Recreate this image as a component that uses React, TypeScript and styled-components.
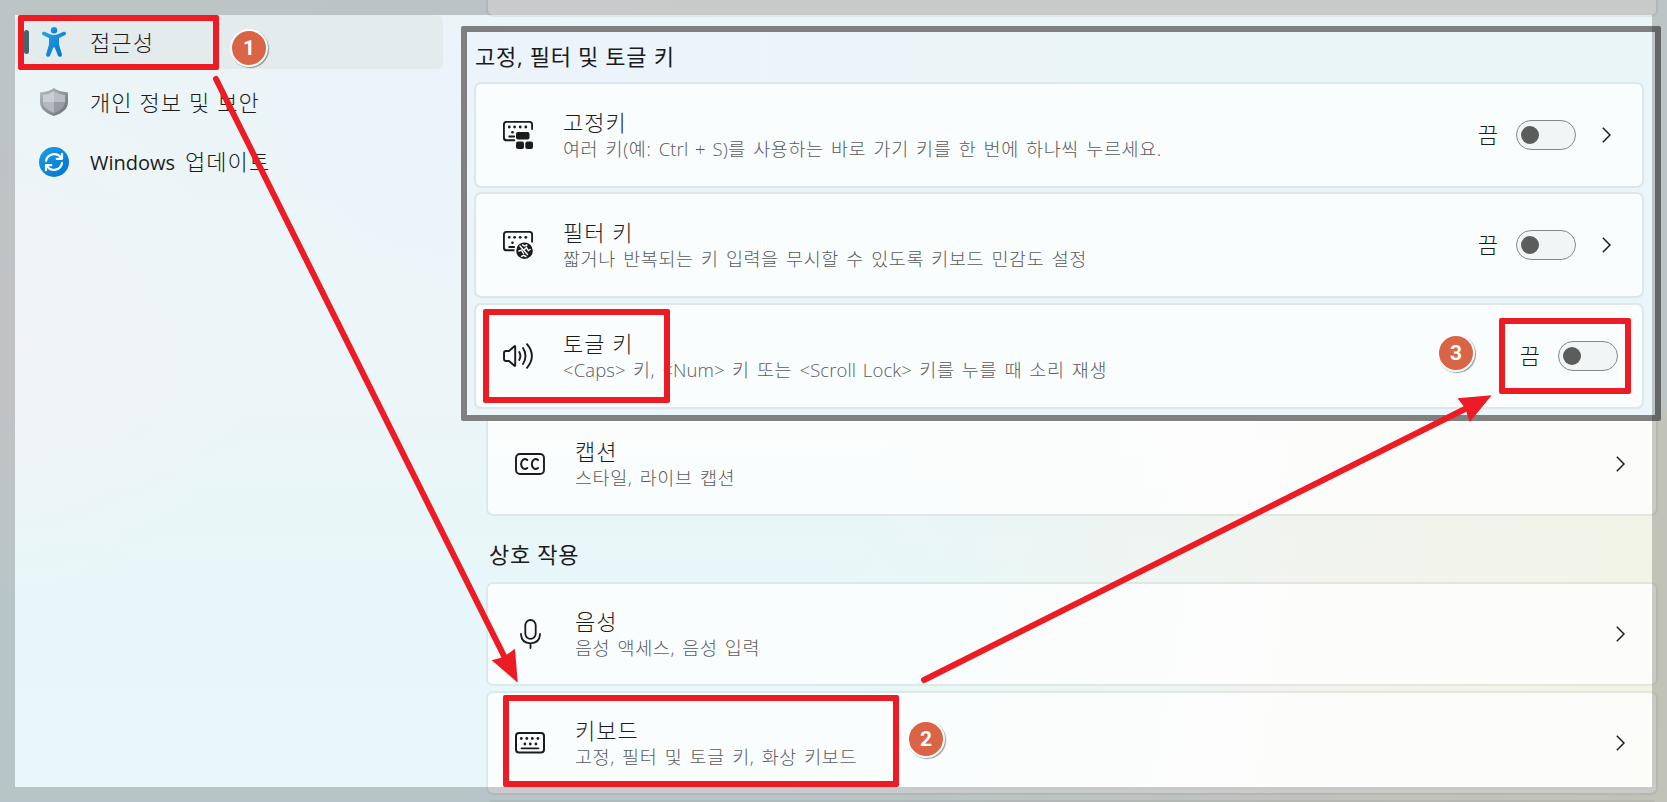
import type { FC, ReactNode } from 'react'
import React from 'react'
import styled, { createGlobalStyle } from 'styled-components'

const GlobalStyle = createGlobalStyle`
  * {
    box-sizing: border-box;
  }

  body {
    margin: 0;
    overflow: hidden;
    color: #1b1b1b;
    font-family: 'Open Sans', 'Noto Sans CJK KR', sans-serif;
  }
`

const Page = styled.div`
  position: relative;
  display: flex;
  width: 1667px;
  height: 802px;
  overflow: hidden;
  background:
    radial-gradient(ellipse 260px 230px at 470px 100px, rgba(235, 243, 252, 0.8), transparent),
    radial-gradient(ellipse 260px 260px at 0 340px, rgba(242, 243, 246, 0.9), transparent),
    linear-gradient(100deg, transparent 48%, rgba(242, 243, 237, 0.95) 75%, #f3f4e6 96%) 0 410px
      no-repeat,
    linear-gradient(180deg, #ebf5f7 0%, #ecf5f7 50%, #e7f7f9 72%, #e7f7fa 100%);
`

/* Navigation */

const Sidebar = styled.nav`
  display: flex;
  flex: none;
  flex-direction: column;
  gap: 6px;
  width: 461px;
  padding: 15px 18px 0 15px;
`

const NavItem = styled.div<{ $active?: boolean }>`
  display: flex;
  align-items: center;
  height: 54px;
  padding-left: 9px;
  border-radius: 6px;
  background: ${({ $active }) => ($active ? '#e4ebed' : 'transparent')};
`

const Indicator = styled.span<{ $active?: boolean }>`
  width: 5px;
  height: 24px;
  border-radius: 3px;
  background: ${({ $active }) => ($active ? '#43666c' : 'transparent')};
`

const NavIcon = styled.span`
  display: flex;
  justify-content: center;
  width: 30px;
  margin: 0 21px 0 10px;
`

const NavLabel = styled.span`
  padding-bottom: 1px;
  font-size: 22px;
  line-height: 30px;
  letter-spacing: 1.1px;
  white-space: nowrap;
  font-weight: 300;
`

const NavLatin = styled.span`
  margin-right: 3px;
  font-size: 20px;
  font-weight: 400;
  letter-spacing: 0;
`

const Latin = styled.span`
  font-size: 18.5px;
  letter-spacing: 0.1px;
`

/* Content */

const Main = styled.main`
  display: flex;
  flex: none;
  flex-direction: column;
  width: 1206px;
`

const Card = styled.section`
  display: flex;
  flex: none;
  align-items: center;
  height: 106px;
  padding: 0 31px 0 27px;
  border: 2px solid #dde7ea;
  border-radius: 7px;
  background: #f9fdfe;
  background-clip: padding-box;
`

const PageCard = styled(Card)`
  height: 104px;
  margin: 0 9px 5px 25px;
  border-color: rgba(0, 0, 0, 0.055);
  background: rgba(255, 255, 255, 0.77);
  background-clip: padding-box;
`

const CutCard = styled(PageCard)`
  height: 17px;
  margin-bottom: 9px;
  border-top: 0;
  border-radius: 0 0 7px 7px;
`

const CaptionCard = styled(PageCard)`
  margin-top: -9px;
  margin-bottom: 0;
`

const ToggleCard = styled(Card)`
  margin-top: 1px;
  padding-right: 24px;
`

const Panel = styled.div`
  z-index: 1;
  display: flex;
  flex: none;
  flex-direction: column;
  gap: 4px;
  width: 1200px;
  height: 395px;
  padding: 0 11px 0 7px;
  border: 6px solid #808080;
  border-radius: 2px;
  background:
    linear-gradient(180deg, transparent 20%, #e9f5f8 60%),
    linear-gradient(90deg, #ecf4fb 0%, #ebf5f7 50%, #e9f5f8 100%);
`

const Heading = styled.h2<{ $inPanel?: boolean }>`
  flex: none;
  height: ${({ $inPanel }) => ($inPanel ? 46 : 66)}px;
  margin: 0;
  padding: ${({ $inPanel }) => ($inPanel ? '8px 0 0 1px' : '22px 0 0 28px')};
  font-size: 22px;
  line-height: 32px;
  font-weight: 400;
  letter-spacing: 0.7px;
`

const CardIcon = styled.span`
  display: flex;
  justify-content: center;
  flex: none;
  width: 30px;
  margin-right: 30px;
`

const CardText = styled.div`
  flex: 1;
  padding-top: 1px;
  white-space: nowrap;
`

const CardTitle = styled.div`
  font-size: 22px;
  line-height: 26px;
  font-weight: 300;
  letter-spacing: 1px;
`

const CardDescription = styled.div`
  padding-top: 1px;
  color: #5a5b5b;
  font-size: 18.5px;
  line-height: 26px;
  font-weight: 300;
  letter-spacing: 0.6px;
  word-spacing: 1.9px;
`

const SwitchLabel = styled.span`
  margin-right: 18px;
  padding-bottom: 2px;
  font-size: 22px;
  line-height: 30px;
  font-weight: 300;
`

const Switch = styled.span`
  display: flex;
  align-items: center;
  width: 60px;
  height: 30px;
  padding-left: 4px;
  border: 1px solid #868788;
  border-radius: 15px;
  background: #f2f5f6;

  &::before {
    width: 18px;
    height: 18px;
    border-radius: 50%;
    background: #5b5d5d;
    content: '';
  }
`

const ChevronSvg = styled.svg<{ $spaced?: boolean }>`
  margin-left: ${({ $spaced }) => ($spaced ? 26 : 0)}px;
`

/* Annotations drawn over the page */

const Shade = styled.div`
  position: absolute;
  inset: 0;
  z-index: 2;
  border: 15px solid rgba(0, 0, 0, 0.2);
`

const Marker = styled.div<{ $x: number; $y: number; $w: number; $h: number }>`
  position: absolute;
  top: ${({ $y }) => $y}px;
  left: ${({ $x }) => $x}px;
  z-index: 3;
  width: ${({ $w }) => $w}px;
  height: ${({ $h }) => $h}px;
  border: 6px solid #ed1c24;
  border-radius: 2px;
`

const Arrows = styled.svg`
  position: absolute;
  inset: 0;
  z-index: 3;
`

const Step = styled.div<{ $x: number; $y: number }>`
  position: absolute;
  top: ${({ $y }) => $y - 19}px;
  left: ${({ $x }) => $x - 19}px;
  z-index: 4;
  display: flex;
  align-items: center;
  justify-content: center;
  width: 38px;
  height: 38px;
  border: 2px solid #fff;
  border-radius: 50%;
  background: #d96446;
  box-shadow: 1px 1px 1px rgba(0, 0, 0, 0.4);
  color: #fff;
  font: bold 21px/34px Roboto, sans-serif;
`

/* Icons */

const PersonIcon = () => (
  <svg width="24" height="30" viewBox="0 0 24 30">
    <defs>
      <linearGradient id="person" x1="0" y1="0" x2="1" y2="1">
        <stop offset="0" stopColor="#22a5e8" />
        <stop offset="1" stopColor="#0670c9" />
      </linearGradient>
    </defs>
    <g fill="url(#person)">
      <circle cx="12" cy="3.2" r="3.2" />
      <path d="M2.600 4.800 8 7.200q4 1.500 8 0l5.400-2.400q1.800-.6 2.500.9.5 1.600-1.100 2.500L17 10.900v6.600l2.900 9.700q.3 1.900-1.300 2.500-1.900.5-2.700-1.200L12.900 21q-.9-1.500-1.800 0l-3 7.500q-.8 1.700-2.700 1.200-1.600-.6-1.300-2.500L7 17.500v-6.600L1.200 8.200Q-.4 7.300.1 5.700q.7-1.500 2.500-.9Z" />
    </g>
  </svg>
)

const ShieldIcon = () => (
  <svg width="28" height="28" viewBox="0 0 28 28">
    <defs>
      <linearGradient id="shield" x1="0" y1="0" x2="1" y2="1">
        <stop offset="0" stopColor="#b9bec4" />
        <stop offset="1" stopColor="#666d75" />
      </linearGradient>
    </defs>
    <path
      d="M14 0q5.500 3.700 13 4.200 1 .1 1 1v9q0 9-14 13.800Q0 23.200 0 14.200v-9q0-.9 1-1Q8.500 3.700 14 0Z"
      fill="url(#shield)"
    />
    <path d="M14 3.200Q9 6.300 3 6.900v7.200h11Z" fill="#c9ced4" />
    <path d="M14 3.200q5 3.100 11 3.700v7.200H14Z" fill="#b9bec5" />
    <path d="M3 14.100h11v10.800Q3 20.800 3 14.100Z" fill="#b4b9c0" />
    <path d="M25 14.100H14v10.800q11-4.100 11-10.800Z" fill="#979da5" />
  </svg>
)

const UpdateIcon = () => (
  <svg width="30" height="30" viewBox="0 0 30 30" fill="none">
    <defs>
      <linearGradient id="update" x1="0" y1="0" x2="1" y2="1">
        <stop offset="0" stopColor="#1b9de5" />
        <stop offset="1" stopColor="#0073d1" />
      </linearGradient>
    </defs>
    <circle cx="15" cy="15" r="15" fill="url(#update)" />
    <g stroke="#fff" strokeWidth="2.200" strokeLinecap="round" strokeLinejoin="round">
      <path d="M7 13.800A8.300 8.300 0 0 1 22 10.800" />
      <path d="M23 6.800v5h-5.300" />
      <path d="M23 16.200A8.300 8.300 0 0 1 8 19.200" />
      <path d="M7 23.200v-5h5.300" />
    </g>
  </svg>
)

const StickyKeysIcon = () => (
  <svg width="30" height="28" viewBox="0 0 30 28" fill="none">
    <path
      d="M12 19.300H3.600A2.700 2.700 0 0 1 .9 16.600V3.600A2.700 2.700 0 0 1 3.600.9h22.800a2.700 2.700 0 0 1 2.700 2.700v5.200"
      stroke="#1b1b1b"
      strokeWidth="1.900"
    />
    <path d="M6.200 15.500h5" stroke="#1b1b1b" strokeWidth="1.800" strokeLinecap="round" />
    <g fill="#1b1b1b">
      <circle cx="6.300" cy="6" r="1.400" />
      <circle cx="11.600" cy="6" r="1.400" />
      <circle cx="17.200" cy="6" r="1.400" />
      <circle cx="22.800" cy="6" r="1.400" />
      <circle cx="9.500" cy="11.300" r="1.300" />
      <rect x="13" y="11" width="13.500" height="7.500" rx="2" />
      <rect x="13" y="20.600" width="8" height="7.300" rx="2" />
      <rect x="22.300" y="20.600" width="7.700" height="7.300" rx="2" />
    </g>
  </svg>
)

const FilterKeysIcon = () => (
  <svg width="30" height="28" viewBox="0 0 30 28" fill="none">
    <path
      d="M11.500 19.300H3.600A2.700 2.700 0 0 1 .9 16.600V3.600A2.700 2.700 0 0 1 3.600.9h22.800a2.700 2.700 0 0 1 2.700 2.700v7.800"
      stroke="#1b1b1b"
      strokeWidth="1.900"
    />
    <path d="M6.200 16h5" stroke="#1b1b1b" strokeWidth="1.800" strokeLinecap="round" />
    <g fill="#1b1b1b">
      <circle cx="6.300" cy="6.300" r="1.400" />
      <circle cx="11.600" cy="6.300" r="1.400" />
      <circle cx="17.200" cy="6.300" r="1.400" />
      <circle cx="22.800" cy="6.300" r="1.400" />
      <circle cx="9.500" cy="11.800" r="1.300" />
      <circle cx="21.500" cy="19.700" r="8.300" />
    </g>
    <path
      d="m17 15 7.500 8.500M16 20l2.500-.8 2 3.300M21 19l2.500-2.500 1.800 3.300 1.800-1.300M19.500 13.800l2 1.200 2.500-1M18.500 25.300l2-1 2.500 1.200"
      stroke="#f9fdfe"
      strokeWidth="1.400"
      strokeLinecap="round"
    />
  </svg>
)

const SpeakerIcon = () => (
  <svg
    width="30"
    height="26"
    viewBox="0 0 30 26"
    fill="none"
    stroke="#1b1b1b"
    strokeWidth="1.900"
    strokeLinecap="round"
    strokeLinejoin="round"
  >
    <path d="M12.200 3.500v19q0 .8-.8.3L6 18H3q-2 0-2-2v-6q0-2 2-2h3l5.400-4.800q.8-.5.8.3Z" />
    <path d="M16.200 9q2.400 4 0 8" />
    <path d="M20 5q5 8 0 16" />
    <path d="M24 1.200q9.800 11.800 0 23.600" />
  </svg>
)

const CaptionIcon = () => (
  <svg width="30" height="22" viewBox="0 0 30 22" fill="none" stroke="#1b1b1b">
    <rect x="1" y="1" width="28" height="20" rx="4" strokeWidth="1.900" />
    <g strokeWidth="2" strokeLinecap="round">
      <path d="M12.300 7q-2.200-1.900-4.300-.3-1.900 1.600-1.900 4.300t1.900 4.300q2.100 1.600 4.300-.3" />
      <path d="M23 7q-2.200-1.900-4.300-.3-1.900 1.600-1.900 4.300t1.900 4.300q2.100 1.600 4.300-.3" />
    </g>
  </svg>
)

const MicIcon = () => (
  <svg
    width="21"
    height="30"
    viewBox="0 0 21 30"
    fill="none"
    stroke="#1b1b1b"
    strokeWidth="1.800"
    strokeLinecap="round"
  >
    <rect x="5.300" y="1" width="10.400" height="18.800" rx="5.200" />
    <path d="M1 14.800v.8Q1.600 24 10.500 24.300 19.400 24 20 15.600v-.8M10.500 24.300v4.800" />
  </svg>
)

const KeyboardIcon = () => (
  <svg width="30" height="22" viewBox="0 0 30 22" fill="none">
    <rect x="1" y="1" width="28" height="19.600" rx="3" stroke="#1b1b1b" strokeWidth="2" />
    <path d="M6.500 16.300h17" stroke="#1b1b1b" strokeWidth="1.800" strokeLinecap="round" />
    <g fill="#1b1b1b">
      <circle cx="6.300" cy="6.500" r="1.400" />
      <circle cx="11.800" cy="6.500" r="1.400" />
      <circle cx="17.300" cy="6.500" r="1.400" />
      <circle cx="22.900" cy="6.500" r="1.400" />
      <circle cx="9.900" cy="12" r="1.400" />
      <circle cx="15.300" cy="12" r="1.400" />
      <circle cx="20.900" cy="12" r="1.400" />
    </g>
  </svg>
)

const Chevron: FC<{ spaced?: boolean }> = ({ spaced }) => (
  <ChevronSvg $spaced={spaced} width="9" height="16" viewBox="0 0 9 16" fill="none">
    <path d="m.8.800 7.200 7.200-7.200 7.200" stroke="#1b1b1b" strokeWidth="1.500" />
  </ChevronSvg>
)

interface CardBodyProps {
  icon: ReactNode
  title: string
  children: ReactNode
}

const CardBody: FC<CardBodyProps> = ({ icon, title, children }) => (
  <>
    <CardIcon>{icon}</CardIcon>
    <CardText>
      <CardTitle>{title}</CardTitle>
      <CardDescription>{children}</CardDescription>
    </CardText>
  </>
)

const OffSwitch = () => (
  <>
    <SwitchLabel>끔</SwitchLabel>
    <Switch role="switch" aria-checked="false" />
  </>
)

const App: FC = () => (
  <>
    <GlobalStyle />
    <Page>
      <Sidebar>
        <NavItem $active>
          <Indicator $active />
          <NavIcon>
            <PersonIcon />
          </NavIcon>
          <NavLabel>접근성</NavLabel>
        </NavItem>
        <NavItem>
          <Indicator />
          <NavIcon>
            <ShieldIcon />
          </NavIcon>
          <NavLabel>개인 정보 및 보안</NavLabel>
        </NavItem>
        <NavItem>
          <Indicator />
          <NavIcon>
            <UpdateIcon />
          </NavIcon>
          <NavLabel>
            <NavLatin>Windows</NavLatin> 업데이트
          </NavLabel>
        </NavItem>
      </Sidebar>

      <Main>
        <CutCard />
        <Panel>
          <Heading $inPanel>고정, 필터 및 토글 키</Heading>
          <Card>
            <CardBody icon={<StickyKeysIcon />} title="고정키">
              여러 키(예: <Latin>Ctrl + S</Latin>)를 사용하는 바로 가기 키를 한 번에
              하나씩 누르세요.
            </CardBody>
            <OffSwitch />
            <Chevron spaced />
          </Card>
          <Card>
            <CardBody icon={<FilterKeysIcon />} title="필터 키">
              짧거나 반복되는 키 입력을 무시할 수 있도록 키보드 민감도 설정
            </CardBody>
            <OffSwitch />
            <Chevron spaced />
          </Card>
          <ToggleCard>
            <CardBody icon={<SpeakerIcon />} title="토글 키">
              <Latin>&lt;Caps&gt;</Latin> 키, <Latin>&lt;Num&gt;</Latin> 키 또는{' '}
              <Latin>&lt;Scroll Lock&gt;</Latin> 키를 누를 때 소리 재생
            </CardBody>
            <OffSwitch />
          </ToggleCard>
        </Panel>

        <CaptionCard>
          <CardBody icon={<CaptionIcon />} title="캡션">
            스타일, 라이브 캡션
          </CardBody>
          <Chevron />
        </CaptionCard>
        <Heading>상호 작용</Heading>
        <PageCard>
          <CardBody icon={<MicIcon />} title="음성">
            음성 액세스, 음성 입력
          </CardBody>
          <Chevron />
        </PageCard>
        <PageCard>
          <CardBody icon={<KeyboardIcon />} title="키보드">
            고정, 필터 및 토글 키, 화상 키보드
          </CardBody>
          <Chevron />
        </PageCard>
        <PageCard />
      </Main>

      <Shade />
      <Marker $x={18} $y={15} $w={201} $h={55} />
      <Marker $x={483} $y={309} $w={187} $h={94} />
      <Marker $x={1499} $y={318} $w={132} $h={76} />
      <Marker $x={503} $y={695} $w={396} $h={92} />
      <Arrows width="1667" height="802" fill="#ed1c24">
        <g stroke="#ed1c24" strokeWidth="6" strokeLinecap="round">
          <path d="M216 79 504 656" />
          <path d="M924 680 1465 409" />
        </g>
        <path d="M517.700 682.700 491.700 660.300 503.500 657 515 648.700Z" />
        <path d="M1491.700 395.300 1457.500 398.300 1465 408 1469.800 422Z" />
      </Arrows>
      <Step $x={249} $y={48}>
        1
      </Step>
      <Step $x={926} $y={739}>
        2
      </Step>
      <Step $x={1456} $y={353}>
        3
      </Step>
    </Page>
  </>
)

export default App
